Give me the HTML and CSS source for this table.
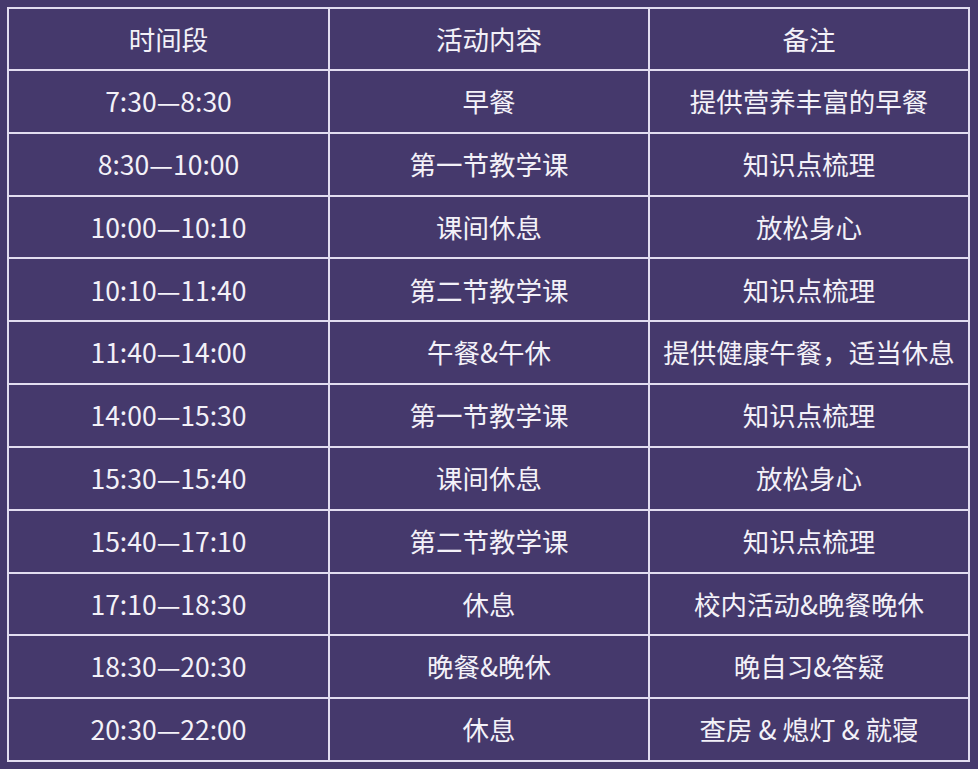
FILE: index.html
```html
<!DOCTYPE html>
<html lang="zh">
<head>
<meta charset="utf-8">
<link rel="stylesheet" href="styles.css">
</head>
<body>
<div class="page">
<table class="schedule">
<colgroup><col class="c1"><col class="c2"><col class="c3"></colgroup>
<thead>
<tr><th>时间段</th><th>活动内容</th><th>备注</th></tr>
</thead>
<tbody>
<tr><td>7:30—8:30</td><td>早餐</td><td>提供营养丰富的早餐</td></tr>
<tr><td>8:30—10:00</td><td>第一节教学课</td><td>知识点梳理</td></tr>
<tr><td>10:00—10:10</td><td>课间休息</td><td>放松身心</td></tr>
<tr><td>10:10—11:40</td><td>第二节教学课</td><td>知识点梳理</td></tr>
<tr><td>11:40—14:00</td><td>午餐&amp;午休</td><td>提供健康午餐，适当休息</td></tr>
<tr><td>14:00—15:30</td><td>第一节教学课</td><td>知识点梳理</td></tr>
<tr><td>15:30—15:40</td><td>课间休息</td><td>放松身心</td></tr>
<tr><td>15:40—17:10</td><td>第二节教学课</td><td>知识点梳理</td></tr>
<tr><td>17:10—18:30</td><td>休息</td><td>校内活动&amp;晚餐晚休</td></tr>
<tr><td>18:30—20:30</td><td>晚餐&amp;晚休</td><td>晚自习&amp;答疑</td></tr>
<tr><td>20:30—22:00</td><td>休息</td><td>查房 &amp; 熄灯 &amp; 就寝</td></tr>
</tbody>
</table>
</div>
</body>
</html>
```
FILE: styles.css
```css
html, body {
  margin: 0;
  padding: 0;
  background: #45396c;
}
.page {
  width: 978px;
  height: 769px;
  padding: 7px 0 0 7px;
  box-sizing: border-box;
  background: #45396c;
}
.schedule {
  border-collapse: collapse;
  width: 963px;
  height: 755px;
  table-layout: fixed;
  font-family: "Noto Sans CJK SC", "Noto Sans", sans-serif;
  font-size: 26.5px;
  color: #f3f1f8;
}
.c1 { width: 321px; }
.c2 { width: 320px; }
.c3 { width: 320px; }
.schedule th,
.schedule td {
  border: 2px solid #e2ddf0;
  text-align: center;
  vertical-align: middle;
  font-weight: 400;
  padding: 0;
  height: 60px;
  line-height: 1;
}
```
